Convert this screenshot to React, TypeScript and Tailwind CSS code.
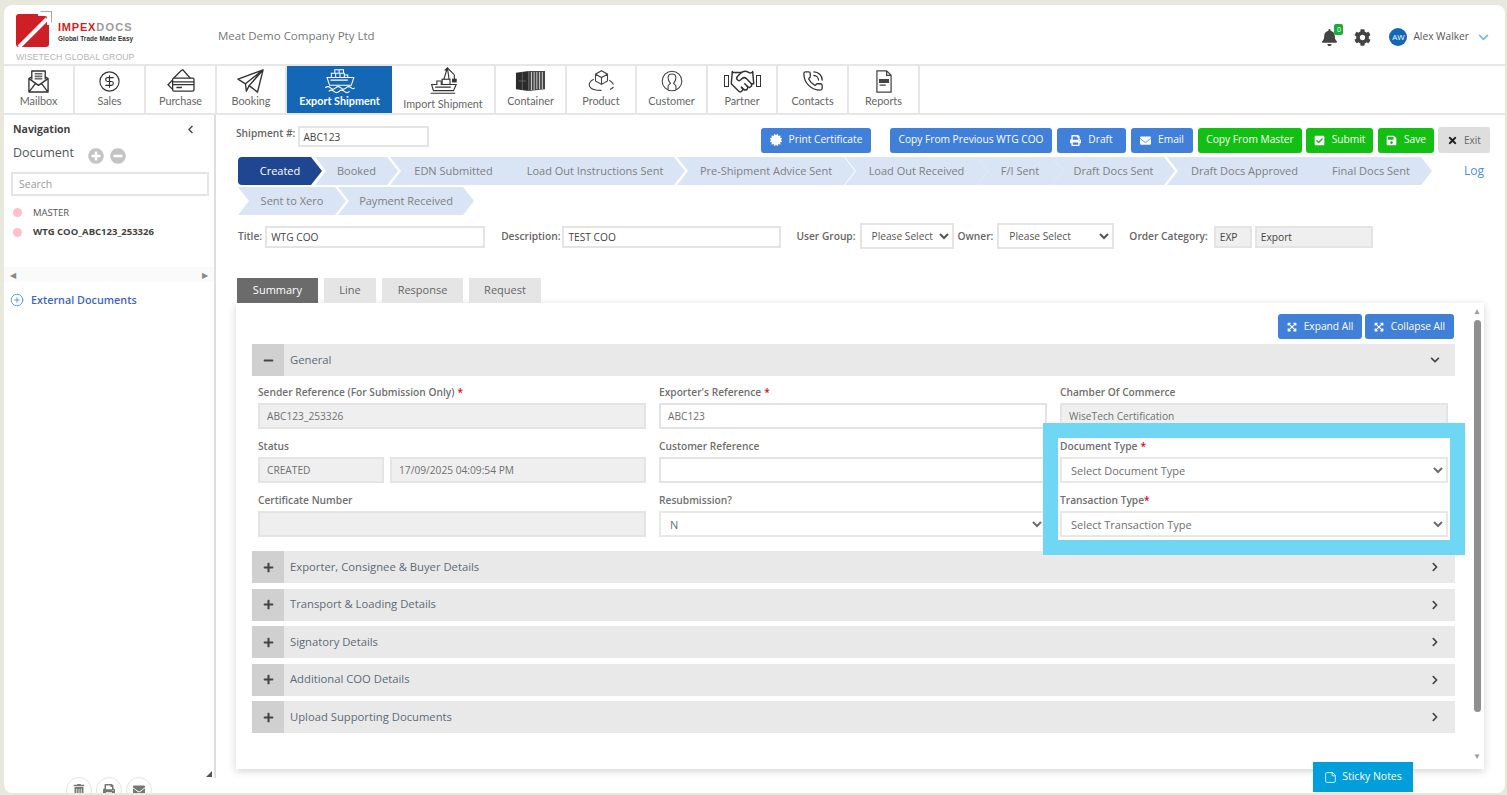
import { CircleDollarSign, CirclePlus, Handshake, PhoneCall, StickyNote } from 'lucide-react'
import {
  FaBell,
  FaCertificate,
  FaCheckSquare,
  FaChevronDown,
  FaChevronLeft,
  FaChevronRight,
  FaCog,
  FaEnvelope,
  FaExpandArrowsAlt,
  FaMinus,
  FaMinusCircle,
  FaPlus,
  FaPlusCircle,
  FaPrint,
  FaSave,
  FaTimes,
  FaTrashAlt,
} from 'react-icons/fa'

const MailboxIcon = () => (
  <svg viewBox="0 0 24 26" className="h-[25px] w-[23px]" fill="none" stroke="#333" strokeWidth="1.4" strokeLinejoin="round">
    <path d="M5 11V2h14v9" />
    <path d="M8 5h8M8 7.5h8M8 10h8" strokeWidth="1.6" stroke="#666" />
    <path d="M2 10v14h20V10l-3-2M5 8l-3 2 10 7 10-7M2 24l7-9M22 24l-7-9" />
  </svg>
)

const PurchaseIcon = () => (
  <svg viewBox="0 0 32 28" className="h-[26px] w-[30px]" fill="none" stroke="#333" strokeWidth="1.4">
    <path d="M8 11 16 3l2-1 8 9" />
    <rect x="7" y="11" width="23" height="14" rx="1.5" />
    <path d="M7 13 2 18l5 5M7 15h23M7 18h23M11 21h6" />
  </svg>
)

const BookingIcon = () => (
  <svg viewBox="0 0 32 28" className="h-[26px] w-[30px]" fill="none" stroke="#333" strokeWidth="1.5" strokeLinejoin="round">
    <path d="M2 12 29 2l-6 24-9-7-3 6-1-8zM29 2 10 17M29 2 14 19" />
  </svg>
)

const ExportIcon = () => (
  <svg viewBox="0 0 36 30" className="h-[26px] w-[32px]" fill="none" stroke="#fff" strokeWidth="1.2">
    <path d="M12 2h5v4h-5zM17 2h5v4h-5zM8 6h5v5H8zM13 6h5v5h-5zM18 6h5v5h-5zM23 8h4v3h-4z" />
    <path d="M3 11h31l-3 9H6zM7 14h20" />
    <path d="M1 23c2-2 4-2 6 0s4 2 6 0 4-2 6 0 4 2 6 0 4-2 6 0 3 1 4 0M5 27c2-2 4-2 6 0s4 2 6 0 4-2 6 0 4 2 6 0" />
  </svg>
)

const ImportIcon = () => (
  <svg viewBox="0 0 32 32" className="h-[28px] w-[28px]" fill="none" stroke="#333" strokeWidth="1.3">
    <path d="M18 4l3-3 8 8M21 1l-4 13M21 1l2 13M29 9v5" />
    <rect x="15" y="14" width="9" height="6" />
    <rect x="27" y="14" width="4" height="3" fill="#333" />
    <path d="M3 20h6v-4h5v4h17l-3 7H5z" />
    <path d="M2 30h28M7 23h18" />
  </svg>
)

const ContainerIcon = () => (
  <svg viewBox="0 0 32 22" className="h-[20px] w-[31px]">
    <path d="M0 2 14 0v22L0 20z" fill="#2b2b2b" />
    <path d="M7 1v20M3 11h8" stroke="#888" strokeWidth="0.6" />
    <path d="M14 0h18v20l-18 2z" fill="#444" />
    <path d="M17 1v20M20 1v20M23 1v19M26 1v19M29 1v19" stroke="#ddd" strokeWidth="1" />
  </svg>
)

const ProductIcon = () => (
  <svg viewBox="0 0 32 28" className="h-[24px] w-[29px]" fill="none" stroke="#444" strokeWidth="1.3">
    <path d="M16 2l7 4v8l-7 4-7-4V6zM9 6l7 4 7-4M16 10v8" />
    <path d="M7 12c-4 2-6 5-5 8 2 4 8 5 14 5M25 13c2 1 4 3 5 5M30 21c-1 1-2 2-4 3" />
  </svg>
)

const CustomerIcon = () => (
  <svg viewBox="0 0 28 28" className="h-[22px] w-[22px]" fill="none" stroke="#444" strokeWidth="1.4">
    <circle cx="14" cy="14" r="12.5" />
    <path d="M9 25v-4c0-2 2-3 3-4-2-2-3-4-3-7 0-3 2-5 5-5s5 2 5 5c0 3-1 5-3 7 1 1 3 2 3 4v4" />
  </svg>
)

const ReportsIcon = () => (
  <svg viewBox="0 0 20 26" className="h-[23px] w-[18px]" fill="none" stroke="#444" strokeWidth="1.4">
    <path d="M2 1h11l5 5v19H2zM13 1v5h5" />
    <path d="M5 11h10v3H5zM5 17h7" fill="#444" />
  </svg>
)

const navItems = [
  { label: 'Mailbox', width: 'w-[71px]', icon: <MailboxIcon /> },
  { label: 'Sales', width: 'w-[71px]', icon: <CircleDollarSign size={23} strokeWidth={1.2} color="#333" /> },
  { label: 'Purchase', width: 'w-[71px]', icon: <PurchaseIcon /> },
  { label: 'Booking', width: 'w-[70px]', icon: <BookingIcon /> },
  { label: 'Export Shipment', width: 'w-[105px]', icon: <ExportIcon />, active: true },
  { label: 'Import Shipment', width: 'w-[104px]', icon: <ImportIcon />, low: true },
  { label: 'Container', width: 'w-[71px]', icon: <ContainerIcon /> },
  { label: 'Product', width: 'w-[70px]', icon: <ProductIcon /> },
  { label: 'Customer', width: 'w-[71px]', icon: <CustomerIcon /> },
  {
    label: 'Partner',
    width: 'w-[70px]',
    icon: (
      <div className="flex items-center">
        <div className="h-[12px] w-[5px] border border-[#333]" />
        <Handshake size={27} strokeWidth={1.3} color="#333" />
        <div className="h-[12px] w-[5px] border border-[#333]" />
      </div>
    ),
  },
  { label: 'Contacts', width: 'w-[71px]', icon: <PhoneCall size={22} strokeWidth={1.4} color="#333" /> },
  { label: 'Reports', width: 'w-[71px]', icon: <ReportsIcon /> },
]

const stepsRowOne = [
  { label: 'Created', cls: 'w-[84px] z-10 bg-[#1f4690] text-white rounded-l-[4px] [clip-path:polygon(0_0,calc(100%-11px)_0,100%_50%,calc(100%-11px)_100%,0_100%)]' },
  { label: 'Booked', cls: 'w-[83px] -ml-[7px]' },
  { label: 'EDN Submitted', cls: 'w-[127px] -ml-[8px]' },
  { label: 'Load Out Instructions Sent', cls: 'w-[180px] -ml-[12px]' },
  { label: 'Pre-Shipment Advice Sent', cls: 'w-[178px] -ml-[8px]' },
  { label: 'Load Out Received', cls: 'w-[143px] -ml-[10px]' },
  { label: 'F/I Sent', cls: 'w-[86px] -ml-[11px]' },
  { label: 'Draft Docs Sent', cls: 'w-[123px] -ml-[11px]' },
  { label: 'Draft Docs Approved', cls: 'w-[155px] -ml-[8px]' },
  { label: 'Final Docs Sent', cls: 'w-[122px] -ml-[12px]' },
]

const stepsRowTwo = [
  { label: 'Sent to Xero', cls: 'w-[108px]' },
  { label: 'Payment Received', cls: 'w-[136px] -ml-[8px]' },
]

const sections = [
  'Exporter, Consignee & Buyer Details',
  'Transport & Loading Details',
  'Signatory Details',
  'Additional COO Details',
  'Upload Supporting Documents',
]

const pending =
  'bg-[#d9e4f5] text-[#808080] [clip-path:polygon(0_0,calc(100%-11px)_0,100%_50%,calc(100%-11px)_100%,0_100%,11px_50%)]'

function Step({ label, cls }: { label: string; cls: string }) {
  const isDone = label === 'Created'
  return (
    <div className={`flex h-[28px] shrink-0 items-center justify-center text-[11px] ${isDone ? '' : pending} ${cls}`}>
      {label}
    </div>
  )
}

function ActionButton({ label, icon, color, width }: { label: string; icon?: React.ReactNode; color: string; width: string }) {
  return (
    <div className={`flex h-[25px] items-center justify-center gap-[7px] rounded-[3px] text-[10.2px] font-medium text-white ${color} ${width}`}>
      {icon}
      {label}
    </div>
  )
}

function Label({ text, star, tight }: { text: string; star?: boolean; tight?: boolean }) {
  return (
    <div className="h-[16px] text-[10.2px] leading-[16px] font-semibold text-[#6f6f6f]">
      {text}
      {star && <span className={`text-[#e3001b] ${tight ? '' : 'ml-[3px]'}`}>*</span>}
    </div>
  )
}

const inputCls = 'h-[26px] w-full border-2 border-[#e4e4e4] px-[7px] text-[10.2px] text-[#6f6f6f] outline-none'
const lockedCls = 'bg-[#efefef]'

function TextField({ label, value, star, locked }: { label: string; value: string; star?: boolean; locked?: boolean }) {
  return (
    <div className="flex flex-col gap-[3px]">
      <Label text={label} star={star} />
      <input readOnly value={value} className={`${inputCls} ${locked ? lockedCls : 'bg-white'}`} />
    </div>
  )
}

function SelectField({ label, value, star, tight }: { label: string; value: string; star?: boolean; tight?: boolean }) {
  return (
    <div className="flex flex-col gap-[3px]">
      <Label text={label} star={star} tight={tight} />
      <select defaultValue={value} className="h-[26px] w-full border-2 border-[#e8e8e8] bg-white pl-[5px] text-[11px] text-[#6f6f6f] outline-none">
        <option>{value}</option>
      </select>
    </div>
  )
}

function InlineInput({ value, width, locked }: { value: string; width: string; locked?: boolean }) {
  return (
    <input
      readOnly
      value={value}
      className={`h-[22px] border-2 border-[#e4e4e4] px-[4px] text-[10.2px] text-[#444] outline-none ${width} ${locked ? lockedCls : 'bg-white'}`}
    />
  )
}

function InlineLabel({ text, className }: { text: string; className?: string }) {
  return <span className={`text-[10.2px] font-semibold text-[#666] ${className ?? ''}`}>{text}</span>
}

function PleaseSelect({ width }: { width: string }) {
  return (
    <select defaultValue="Please Select" className={`mb-[3px] h-[26px] border-2 border-[#e4e4e4] bg-white pl-[6px] text-[10.2px] text-[#555] outline-none ${width}`}>
      <option>Please Select</option>
    </select>
  )
}

function SectionHeader({ title, open }: { title: string; open?: boolean }) {
  return (
    <div className="flex h-[32px] items-center bg-[#e9e9e9] pr-[15px]">
      <div className="flex h-full w-[32px] items-center justify-center bg-[#d0d0d0] text-[#444]">
        {open ? <FaMinus size={11} /> : <FaPlus size={11} />}
      </div>
      <span className="ml-[6px] flex-1 text-[11.25px] text-[#5d6a78]">{title}</span>
      {open ? <FaChevronDown size={10} color="#444" /> : <FaChevronRight size={10} color="#444" />}
    </div>
  )
}

function Sidebar() {
  return (
    <div className="w-[212px] shrink-0">
      <div className="relative h-[663px] border-r-2 border-[#dedede]">
        <div className="flex items-center justify-between pt-[7px] pr-[19px] pl-[9px]">
          <span className="text-[10.5px] font-bold text-[#444]">Navigation</span>
          <FaChevronLeft size={9} color="#444" />
        </div>
        <div className="mt-[6px] flex items-start pl-[9px]">
          <span className="text-[12.5px] text-[#555]">Document</span>
          <FaPlusCircle size={16} color="#c4c4c4" className="mt-[4px] ml-[14px]" />
          <FaMinusCircle size={16} color="#c4c4c4" className="mt-[4px] ml-[6px]" />
        </div>
        <input
          placeholder="Search"
          className="mt-[8px] ml-[7px] h-[24px] w-[198px] border-2 border-[#e4e4e4] px-[6px] text-[10.5px] outline-none placeholder:text-[#999]"
        />
        <div className="mt-[10px] flex items-center pl-[9px] text-[9.5px] text-[#555]">
          <span className="h-[9px] w-[9px] rounded-full bg-[#ffc0cb]" />
          <span className="ml-[11px]">MASTER</span>
        </div>
        <div className="mt-[5px] flex items-center pl-[9px] text-[9.5px] font-bold text-[#444]">
          <span className="h-[9px] w-[9px] rounded-full bg-[#ffc0cb]" />
          <span className="ml-[11px]">WTG COO_ABC123_253326</span>
        </div>
        <div className="mt-[28px] flex h-[15px] items-center justify-between bg-[#fafafa] px-[6px] text-[8px] text-[#888]">
          <span>◀</span>
          <span>▶</span>
        </div>
        <div className="mt-[10px] flex items-center pl-[6px]">
          <CirclePlus size={14} strokeWidth={1.4} color="#3b8ad9" />
          <span className="ml-[7px] text-[10.8px] font-semibold text-[#3d66c4]">External Documents</span>
        </div>
        <div className="absolute right-[2px] bottom-[1px] h-0 w-0 border-b-[6px] border-l-[6px] border-b-[#555] border-l-transparent" />
      </div>
      <div className="-mt-px flex pl-[62px]">
        {[<FaTrashAlt key="trash" />, <FaPrint key="print" />, <FaEnvelope key="mail" />].map((icon, i) => (
          <div key={i} className="mr-[4px] flex h-[26px] w-[26px] items-center justify-center rounded-full border border-[#e4e4e4] bg-white text-[12px] text-[#777]">
            {icon}
          </div>
        ))}
      </div>
    </div>
  )
}

function SummaryPanel() {
  return (
    <div className="flex h-[466px] w-[1248px] bg-white shadow-[0_2px_8px_rgba(0,0,0,0.18)]">
      <div className="ml-[16px] w-[1203px]">
        <div className="mt-[11px] flex justify-end gap-[3px] pr-px">
          <ActionButton label="Expand All" width="w-[84px]" color="bg-[#4080d8]" icon={<FaExpandArrowsAlt size={10} />} />
          <ActionButton label="Collapse All" width="w-[89px]" color="bg-[#4080d8]" icon={<FaExpandArrowsAlt size={10} />} />
        </div>
        <div className="mt-[5px]">
          <SectionHeader title="General" open />
        </div>
        <div className="grid grid-cols-3 gap-x-[13px] gap-y-[9px] pt-[8px] pr-[7px] pb-[14px] pl-[6px]">
          <TextField label="Sender Reference (For Submission Only)" value="ABC123_253326" star locked />
          <TextField label="Exporter's Reference" value="ABC123" star />
          <TextField label="Chamber Of Commerce" value="WiseTech Certification" locked />

          <div className="flex flex-col gap-[3px]">
            <Label text="Status" />
            <div className="flex gap-[6px]">
              <input readOnly value="CREATED" className={`${inputCls} ${lockedCls} !w-[126px]`} />
              <input readOnly value="17/09/2025 04:09:54 PM" className={`${inputCls} ${lockedCls} flex-1`} />
            </div>
          </div>
          <TextField label="Customer Reference" value="" />
          <div className="relative row-span-2 flex flex-col gap-[9px]">
            <SelectField label="Document Type" value="Select Document Type" star />
            <SelectField label="Transaction Type" value="Select Transaction Type" star tight />
            {/* highlight drawn over the screenshot */}
            <div className="pointer-events-none absolute -top-[15px] -right-[17px] -bottom-[18px] -left-[17px] border-[15px] border-[#6fd6f4]" />
          </div>

          <TextField label="Certificate Number" value="" locked />
          <SelectField label="Resubmission?" value="N" />
        </div>
        <div className="flex flex-col gap-[5.5px]">
          {sections.map((title) => (
            <SectionHeader key={title} title={title} />
          ))}
        </div>
      </div>
      <div className="ml-[17px] flex w-[10px] flex-col items-center pt-[4px] text-[8px] leading-none text-[#999]">
        <span>▲</span>
        <div className="mt-[5px] h-[392px] w-[7px] rounded-full bg-[#8f8f8f]" />
        <span className="mt-[40px]">▼</span>
      </div>
    </div>
  )
}

export default function App() {
  return (
    <div className="h-[795px] w-[1507px] overflow-hidden bg-[#e8e8dd] pt-[5px] pr-[2px] pb-[2px] pl-[4px] font-['Open_Sans',sans-serif]">
      <div className="relative flex h-full flex-col overflow-hidden rounded-[8px] bg-white">
        <header className="flex h-[61px] shrink-0 items-center border-b-2 border-[#e6e6e6]">
          <div className="ml-[12px] w-[190px] self-start pt-[6px]">
            <div className="flex items-start">
              <svg viewBox="0 0 36 36" className="h-[36px] w-[36px]">
                <rect x="0" y="3" width="33" height="33" rx="3" fill="#cf1f26" />
                <path d="M24 0h12v12z" fill="#a9a9a9" />
                <path d="M3 36 31 8M22 3h11v11" stroke="#fff" strokeWidth="4" fill="none" />
              </svg>
              <div className="mt-[10px] ml-[6px]">
                <div className="font-['Liberation_Sans',sans-serif] text-[11px] leading-[13px] font-bold tracking-[0.8px] text-[#cf1f26]">
                  IMPEX<span className="tracking-[1.2px] text-[#9a9a9a]">DOCS</span>
                </div>
                <div className="origin-left scale-x-[0.85] font-['Liberation_Sans',sans-serif] text-[7.5px] leading-[10px] font-bold tracking-[0.1px] whitespace-nowrap text-[#333]">
                  Global Trade Made Easy
                </div>
              </div>
            </div>
            <div className="mt-[5px] font-['Liberation_Sans',sans-serif] text-[8.8px] leading-[10px] text-[#b5b5b5]">WISETECH GLOBAL GROUP</div>
          </div>
          <span className="mt-[2px] ml-[12px] text-[11.5px] text-[#777]">Meat Demo Company Pty Ltd</span>
          <div className="relative mt-[5px] ml-auto flex items-center pr-[16px]">
            <div className="relative">
              <FaBell size={17} color="#444" />
              <span className="absolute -top-[5px] -right-[5px] flex h-[11px] w-[9px] items-center justify-center rounded-[2px] bg-[#1faa3c] text-[7px] leading-none text-white">0</span>
            </div>
            <FaCog size={17} color="#444" className="ml-[16px]" />
            <span className="ml-[18px] flex h-[18px] w-[18px] items-center justify-center rounded-full bg-[#1467b5] text-[8px] text-white">AW</span>
            <span className="ml-[6px] text-[10.2px] text-[#555]">Alex Walker</span>
            <svg viewBox="0 0 12 8" className="ml-[9px] h-[7px] w-[11px]" fill="none" stroke="#74b9ee" strokeWidth="2">
              <path d="M1 1l5 5 5-5" />
            </svg>
          </div>
        </header>

        <nav className="flex h-[49px] shrink-0 border-b-2 border-[#e6e6e6]">
          {navItems.map((item) => (
            <div
              key={item.label}
              className={`flex shrink-0 flex-col items-center font-['Lato',sans-serif] text-[10.8px] ${item.width} ${
                item.active ? 'bg-[#1467b5] font-bold text-white' : 'border-r-2 border-[#e6e6e6] text-[#666]'
              }`}
            >
              <div className="flex h-[28px] items-center justify-center pt-[2px]">{item.icon}</div>
              <span className={`leading-[14px] ${item.low ? 'mt-[3px]' : ''}`}>{item.label}</span>
            </div>
          ))}
        </nav>

        <div className="flex min-h-0 flex-1">
          <Sidebar />
          <main className="min-w-0 flex-1 pl-[20px]">
            <div className="mt-[11px] flex items-start">
              <InlineLabel text="Shipment #:" />
              <input readOnly value="ABC123" className="ml-[3px] h-[21px] w-[131px] border-2 border-[#e4e4e4] px-[3px] text-[10.2px] text-[#444] outline-none" />
              <div className="ml-auto flex items-center pt-px pr-[15px]">
                <ActionButton label="Print Certificate" width="w-[110px]" color="bg-[#4080d8]" icon={<FaCertificate size={12} />} />
                <ActionButton label="Copy From Previous WTG COO" width="w-[162px] ml-[19px]" color="bg-[#4080d8]" />
                <ActionButton label="Draft" width="w-[69px] ml-[5px]" color="bg-[#4080d8]" icon={<FaPrint size={11} />} />
                <ActionButton label="Email" width="w-[62px] ml-[5px]" color="bg-[#4080d8]" icon={<FaEnvelope size={11} />} />
                <ActionButton label="Copy From Master" width="w-[104px] ml-[5px]" color="bg-[#12bf12]" />
                <ActionButton label="Submit" width="w-[67px] ml-[4px]" color="bg-[#12bf12]" icon={<FaCheckSquare size={11} />} />
                <ActionButton label="Save" width="w-[56px] ml-[5px]" color="bg-[#12bf12]" icon={<FaSave size={11} />} />
                <div className="ml-[4px] flex h-[26px] w-[52px] items-center justify-center gap-[6px] rounded-[3px] bg-[#dedede] text-[10px] text-[#666]">
                  <FaTimes size={11} color="#222" />
                  Exit
                </div>
              </div>
            </div>

            <div className="mt-[4px] flex items-center pl-[2px]">
              {stepsRowOne.map((step) => (
                <Step key={step.label} {...step} />
              ))}
              <span className="ml-[32px] text-[12px] text-[#4a90e2]">Log</span>
            </div>
            <div className="mt-[2px] flex pl-[2px]">
              {stepsRowTwo.map((step) => (
                <Step key={step.label} {...step} />
              ))}
            </div>

            <div className="mt-[9px] flex h-[26px] items-center pl-[2px]">
              <InlineLabel text="Title:" />
              <InlineInput value="WTG COO" width="ml-[3px] w-[220px]" />
              <InlineLabel text="Description:" className="ml-[16px]" />
              <InlineInput value="TEST COO" width="ml-[2px] w-[219px]" />
              <InlineLabel text="User Group:" className="ml-[15px]" />
              <div className="ml-[4px] flex">
                <PleaseSelect width="w-[94px]" />
              </div>
              <InlineLabel text="Owner:" className="ml-[4px]" />
              <div className="ml-[4px] flex">
                <PleaseSelect width="w-[117px]" />
              </div>
              <InlineLabel text="Order Category:" className="ml-[15px]" />
              <InlineInput value="EXP" width="ml-[6px] w-[38px]" locked />
              <InlineInput value="Export" width="ml-[3px] w-[118px]" locked />
            </div>

            <div className="mt-[28px] flex h-[25px] items-stretch gap-[6px] pl-px text-[11px] text-[#666]">
              <div className="flex w-[81px] items-center justify-center bg-[#6b6b6b] text-white">Summary</div>
              <div className="flex w-[52px] items-center justify-center bg-[#e5e5e5]">Line</div>
              <div className="flex w-[81px] items-center justify-center bg-[#e5e5e5]">Response</div>
              <div className="flex w-[72px] items-center justify-center bg-[#e5e5e5]">Request</div>
            </div>
            <SummaryPanel />
          </main>
        </div>

        <div className="absolute right-[92px] bottom-[1px] flex h-[30px] w-[100px] items-center justify-center gap-[5px] bg-[#009edb] text-[10.5px] text-white">
          <StickyNote size={13} strokeWidth={1.5} />
          Sticky Notes
        </div>
      </div>
    </div>
  )
}
